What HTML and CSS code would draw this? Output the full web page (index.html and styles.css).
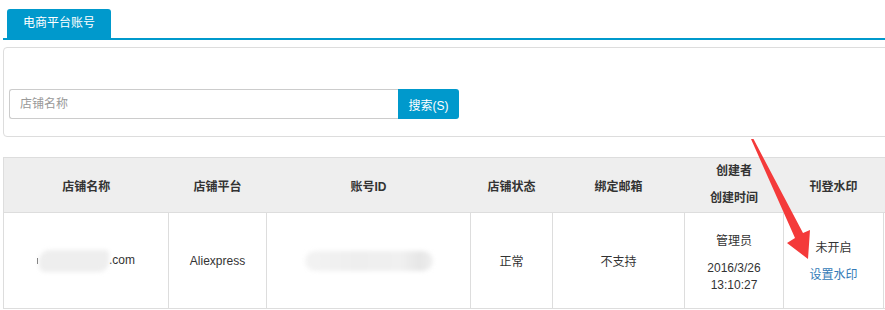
FILE: index.html
```html
<!DOCTYPE html>
<html lang="zh-CN">
<head>
    <meta charset="UTF-8">
    <meta name="viewport" content="width=device-width, initial-scale=1.0">
    <title>电商平台账号</title>
    <link rel="stylesheet" href="styles.css">
</head>
<body>
    <div class="page">
        <div class="tabs">
            <a class="tab active" href="#">电商平台账号</a>
        </div>

        <div class="panel">
            <div class="search">
                <input type="text" class="search-input" placeholder="店铺名称">
                <button class="search-btn">搜索(S)</button>
            </div>
        </div>

        <table class="grid">
            <colgroup>
                <col style="width:165px">
                <col style="width:98px">
                <col style="width:204px">
                <col style="width:82px">
                <col style="width:132px">
                <col style="width:99px">
                <col style="width:100px">
                <col style="width:120px">
            </colgroup>
            <thead>
                <tr>
                    <th>店铺名称</th>
                    <th>店铺平台</th>
                    <th>账号ID</th>
                    <th>店铺状态</th>
                    <th>绑定邮箱</th>
                    <th><div class="line">创建者</div><div class="line">创建时间</div></th>
                    <th>刊登水印</th>
                    <th></th>
                </tr>
            </thead>
            <tbody>
                <tr>
                    <td><span class="tick"></span><span class="mask mask-name"></span>.com</td>
                    <td>Aliexpress</td>
                    <td><span class="mask mask-id"></span></td>
                    <td>正常</td>
                    <td>不支持</td>
                    <td>
                        <div class="line">管理员</div>
                        <div class="time">2016/3/26<br>13:10:27</div>
                    </td>
                    <td>
                        <div class="stack">
                            <div class="line">未开启</div>
                            <div class="line"><a class="link" href="#">设置水印</a></div>
                        </div>
                    </td>
                    <td></td>
                </tr>
            </tbody>
        </table>

        <!-- annotation arrow drawn over the table -->
        <svg class="arrow" width="885" height="310" viewBox="0 0 885 310">
            <polygon points="751,139 753.5,139 803,233 810,230 808,259 787,243 795,238" fill="#f43a3a"/>
        </svg>
    </div>
</body>
</html>
```

FILE: styles.css
```css
html, body {
    margin: 0;
    padding: 0;
    overflow: hidden;
    background: #fff;
}

body {
    font-family: "Liberation Sans", "Noto Sans CJK SC", sans-serif;
    font-size: 12px;
    color: #333;
}

.page {
    position: relative;
    width: 1000px;
    padding: 9px 0 0 3px;
}

.tabs {
    display: flex;
    padding-left: 4px;
    border-bottom: 2px solid #0099cc;
}

.tab {
    display: block;
    height: 29px;
    line-height: 29px;
    padding: 0 16px;
    width: 72px;
    text-align: center;
    background-color: #0099cc;
    color: #fff;
    text-decoration: none;
    border-radius: 3px 3px 0 0;
}

.panel {
    margin-top: 7px;
    padding: 41px 5px 17px 5px;
    border: 1px solid #ddd;
    border-radius: 4px;
}

.search {
    display: flex;
}

.search-input {
    box-sizing: border-box;
    width: 389px;
    height: 30px;
    padding: 0 10px;
    border: 1px solid #ccc;
    border-right: none;
    border-radius: 3px 0 0 3px;
    font-family: inherit;
    font-size: 12px;
    color: #555;
    outline: none;
}

.search-input::placeholder {
    color: #999;
}

.search-btn {
    width: 61px;
    height: 30px;
    padding: 0;
    border: none;
    border-radius: 0 3px 3px 0;
    background-color: #0099cc;
    color: #fff;
    font-family: inherit;
    font-size: 12px;
}

.grid {
    margin-top: 20px;
    border-collapse: collapse;
    table-layout: fixed;
    width: 1000px;
}

.grid th {
    height: 54px;
    padding: 0;
    background-color: #eee;
    border-top: 1px solid #ddd;
    border-bottom: 1px solid #ddd;
    font-weight: bold;
    text-align: center;
}

.grid th:first-child {
    border-left: 1px solid #ddd;
}

.grid td {
    height: 95px;
    padding: 0;
    border: 1px solid #ddd;
    text-align: center;
    vertical-align: middle;
}

.stack {
    padding-top: 3px;
}

.line {
    line-height: 27px;
}

.time {
    line-height: 17px;
    margin-top: 5px;
}

.link {
    color: #337ab7;
    text-decoration: none;
}

.mask {
    display: inline-block;
    vertical-align: middle;
    background-color: #eee;
    filter: blur(2px);
}

.mask-name {
    width: 70px;
    height: 22px;
    border-radius: 11px 4px 10px 6px;
    margin-left: 1px;
}

.mask-id {
    width: 128px;
    height: 20px;
    border-radius: 10px;
    background: linear-gradient(90deg, #f3f3f3 0%, #eeeeee 40%, #f0f0f0 75%, #e6e6e6 90%, #f0f0f0 100%);
}

.tick {
    display: inline-block;
    vertical-align: middle;
    width: 1px;
    height: 6px;
    background-color: #666;
}

.arrow {
    position: absolute;
    left: 0;
    top: 0;
    pointer-events: none;
}
```
